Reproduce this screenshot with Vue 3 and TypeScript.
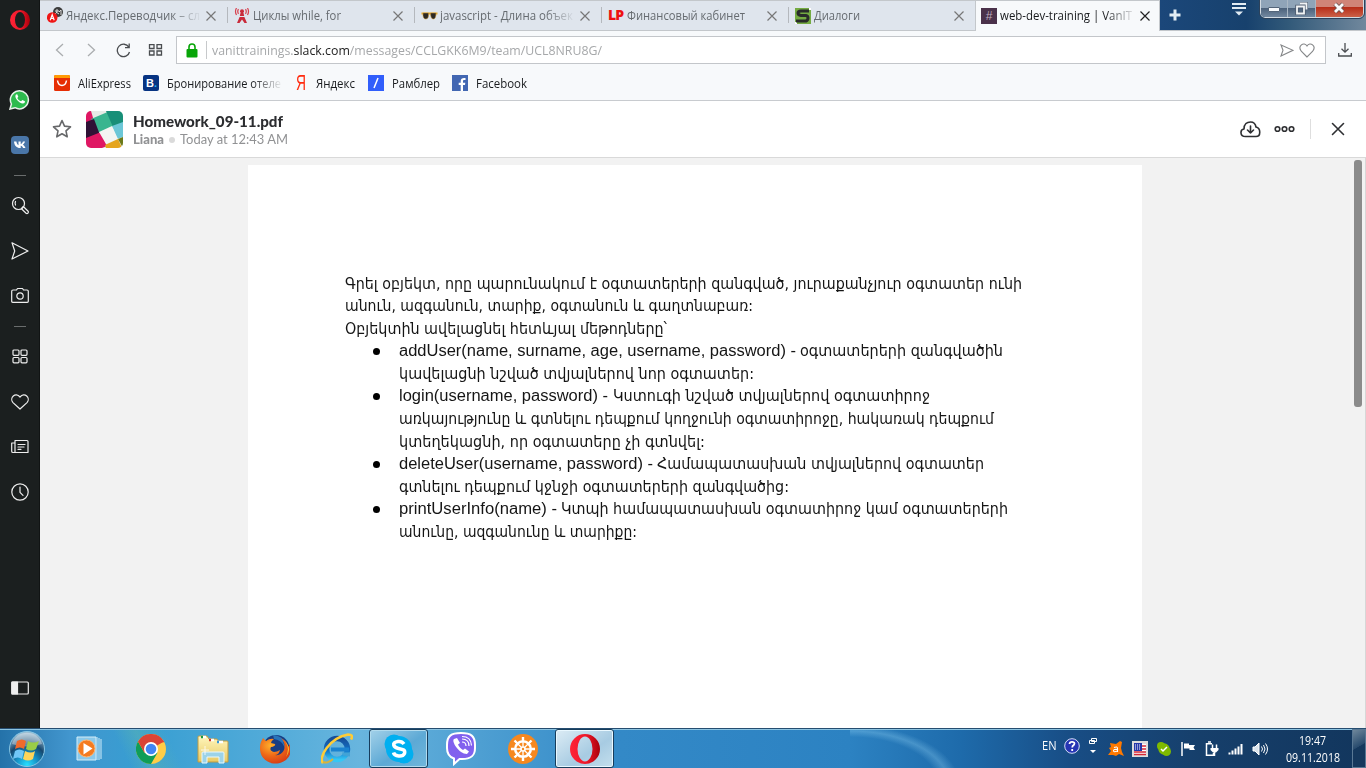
<script setup lang="ts">
import type { Directive } from 'vue'

interface Tab { icon: string; title: string; width: number; active?: boolean; fade?: boolean }
interface Run { text: string; width: number; latin?: boolean; gap?: number }
interface Line { runs: Run[]; item?: boolean; bullet?: boolean }

/* Condenses or stretches a single-line label to a given width in pixels. */
const vFit: Directive<HTMLElement, number> = {
  mounted(el, binding) {
    const natural = el.getBoundingClientRect().width
    if (!natural) return
    el.style.transform = `scaleX(${binding.value / natural})`
    el.style.marginRight = `${binding.value - natural}px`
  },
}

const tabs: Tab[] = [
  { icon: 'translate', title: 'Яндекс.Переводчик – сл', width: 134, fade: true },
  { icon: 'tower', title: 'Циклы while, for', width: 88 },
  { icon: 'glasses', title: 'javascript - Длина объек', width: 133, fade: true },
  { icon: 'lp', title: 'Финансовый кабинет', width: 118 },
  { icon: 's', title: 'Диалоги', width: 46 },
  { icon: 'hash', title: 'web-dev-training | VanIT', width: 132, fade: true, active: true },
]

const lines: Line[] = [
  { runs: [{ text: 'Գրել օբյեկտ, որը պարունակում է օգտատերերի զանգված, յուրաքանչյուր օգտատեր ունի', width: 677 }] },
  { runs: [{ text: 'անուն, ազգանուն, տարիք, օգտանուն և գաղտնաբառ:', width: 408 }] },
  { runs: [{ text: 'Օբյեկտին ավելացնել հետևյալ մեթոդները՝', width: 322 }] },
  { item: true, bullet: true, runs: [{ text: 'addUser(name, surname, age, username, password) -', width: 397, latin: true }, { text: 'օգտատերերի զանգվածին', width: 203, gap: 4 }] },
  { item: true, runs: [{ text: 'կավելացնի նշված տվյալներով նոր օգտատեր:', width: 355 }] },
  { item: true, bullet: true, runs: [{ text: 'login(username, password) -', width: 209, latin: true }, { text: 'Կստուգի նշված տվյալներով օգտատիրոջ', width: 317, gap: 5 }] },
  { item: true, runs: [{ text: 'առկայությունը և գտնելու դեպքում կողջունի օգտատիրոջը, հակառակ դեպքում', width: 595 }] },
  { item: true, runs: [{ text: 'կտեղեկացնի, որ օգտատերը չի գտնվել:', width: 306 }] },
  { item: true, bullet: true, runs: [{ text: 'deleteUser(username, password) -', width: 254, latin: true }, { text: 'Համապատասխան տվյալներով օգտատեր', width: 327, gap: 4 }] },
  { item: true, runs: [{ text: 'գտնելու դեպքում կջնջի օգտատերերի զանգվածից:', width: 390 }] },
  { item: true, bullet: true, runs: [{ text: 'printUserInfo(name) -', width: 158, latin: true }, { text: 'Կտպի համապատասխան օգտատիրոջ կամ օգտատերերի', width: 447, gap: 4 }] },
  { item: true, runs: [{ text: 'անունը, ազգանունը և տարիքը:', width: 238 }] },
]
</script>

<template>
  <div class="screen">
    <svg class="defs" width="0" height="0">
      <defs>
        <linearGradient id="red" x1="0" x2="1"><stop offset="0" stop-color="#ff2437" /><stop offset=".55" stop-color="#ed1729" /><stop offset="1" stop-color="#a9000b" /></linearGradient>
        <linearGradient id="folder" x1="0" y1="0" x2="0" y2="1"><stop offset="0" stop-color="#fff6bd" /><stop offset="1" stop-color="#e9ca62" /></linearGradient>
        <radialGradient id="orb" cx=".5" cy=".95" r=".9"><stop offset="0" stop-color="#25dfff" /><stop offset=".35" stop-color="#168fc4" /><stop offset=".65" stop-color="#16476e" /><stop offset="1" stop-color="#9bbbd0" /></radialGradient>
        <radialGradient id="fox" cx=".35" cy=".3" r=".8"><stop offset="0" stop-color="#ffb12c" /><stop offset=".5" stop-color="#ee6817" /><stop offset="1" stop-color="#d13516" /></radialGradient>
        <linearGradient id="ie" x1="0" y1="0" x2="0" y2="1"><stop offset="0" stop-color="#174f9a" /><stop offset=".55" stop-color="#116fc4" /><stop offset="1" stop-color="#35c7f5" /></linearGradient>
      </defs>
    </svg>
    <div class="browser">
      <nav class="side">
        <div class="slot top"><svg width="20" height="20" viewBox="0 0 30 30"><path fill="url(#red)" fill-rule="evenodd" d="M15 0a15 15 0 1 0 0 30a15 15 0 1 0 0-30zM15 3a7.500 12 0 1 1 0 24a7.500 12 0 1 1 0-24z" /></svg></div>
        <div class="slot"><svg width="21" height="21" viewBox="0 0 21 21"><path d="M1 20l1.400-5A9 9 0 1 1 6 18.700z" fill="#2dbb4e" stroke="#e8f2ea" stroke-width="1.500" /><path d="M7 5.500c-3 3 5 11 8.500 8.500l.5-1.800-2.600-1.300-1.300 1.400C10 11.500 9 10.300 8.300 8.900l1-1.200L8.200 5.300z" fill="#fff" /></svg></div>
        <div class="slot"><svg width="18" height="18" viewBox="0 0 18 18"><rect width="18" height="18" rx="4" fill="#4a76a8" /><path d="M3 5.500h2.400c.3 2 1.200 3.400 2.100 3.800V5.500h2.200v2.600c1-.2 1.800-1.400 2.200-2.600H14c-.3 1.300-1.200 2.500-2.100 3.200 1 .6 2 1.700 2.600 3.300h-2.400c-.4-1.100-1.200-1.900-2.400-2.200V12h-.5C5.600 12 3.300 9.800 3 5.500z" fill="#fff" /></svg></div>
        <i class="dash"></i>
        <div class="slot"><svg class="line" width="20" height="20"><circle cx="8.500" cy="7.500" r="6" /><path d="M5.500 9a4 4 0 0 1 0-3.500M12 12l1.300-1.500 4.800 4.700c1 1.300-.7 3-2 2L11.700 13" /></svg></div>
        <div class="slot"><svg class="line" width="20" height="20"><path d="M2 1.800L18 10 2 18l2.700-8z" /></svg></div>
        <div class="slot"><svg class="line" width="20" height="20"><path d="M3 4h3.500L7.500 2.500h5l1 1.500H17q1.300 0 1.300 1.300v10q0 1-1 1H2.700q-1 0-1-1v-10Q1.700 4 3 4z" /><circle cx="10" cy="10" r="3.200" /></svg></div>
        <i class="dash"></i>
        <div class="slot"><svg class="line" width="18" height="18"><rect x="2" y="2" width="6" height="5.300" rx="1" /><rect x="10" y="2" width="6" height="5.300" rx="1" /><rect x="2" y="9.500" width="6" height="5.300" rx="1" /><rect x="10" y="9.500" width="6" height="5.300" rx="1" /></svg></div>
        <div class="slot"><svg class="line" width="20" height="20"><path d="M10 17L3 10.600C-1 6 5.500-.5 10 5c4.500-5.500 11 1 7 5.600z" /></svg></div>
        <div class="slot"><svg class="line" width="20" height="18"><path d="M5 2.500h12q1 0 1 1v11H3q-1.300 0-1.300-1.300V5H5zM5 5v9M8 6.500h7M8 9h6M8 11.300h3" /></svg></div>
        <div class="slot"><svg class="line" width="20" height="20"><circle cx="10" cy="10" r="8.200" /><path d="M10 5v5.300l3 3" /></svg></div>
        <div class="slot last"><svg class="line" width="20" height="16"><rect x="1.800" y="2" width="16.500" height="12" rx="1" /><path d="M2 2h5.500v12H2z" fill="#eee" /></svg></div>
      </nav>

      <main>
        <header class="tabs">
          <div v-for="t in tabs" :key="t.title" class="tab" :class="{ active: t.active }">
            <span class="fav">
              <svg v-if="t.icon === 'translate'" width="17" height="17"><circle cx="11" cy="5" r="5" fill="#3c3c3c" /><path d="M8 4h4M10 2v2q0 2-2 3M12 5l2-2v5M9 5l3 2" stroke="#ddd" fill="none" /><circle cx="5.200" cy="10.500" r="5.300" fill="#ef1515" /><path d="M3.200 13.200l2-5.400 2 5.400M3.900 11.500h2.600" stroke="#fff" fill="none" stroke-width="1.200" /></svg>
              <svg v-else-if="t.icon === 'tower'" width="16" height="16"><path d="M6.500 5h3l.7 3H5.800zM5.600 9h4.800l2.600 6h-2.500L8 11.500 5.500 15H3z" fill="#c92a3a" /><g fill="none" stroke="#d8404e" stroke-width="1.200"><path d="M4.500 1.200q-1.500 2.300 0 4.600M11.500 1.200q1.500 2.300 0 4.600M2.500 0Q.5 3.500 2.500 7M13.500 0q2 3.500 0 7" /></g><circle cx="8" cy="3.300" r="2" fill="#c92a3a" /></svg>
              <svg v-else-if="t.icon === 'glasses'" width="17" height="16"><path d="M.5 5.500h16" stroke="#e2a92e" stroke-width="2" /><path d="M2 5h5.500q.5 6-2.700 6T2 5zM9.500 5H15q0 6-2.700 6T9.500 5z" fill="#2c2925" stroke="#cc9630" stroke-width=".5" /></svg>
              <b v-else-if="t.icon === 'lp'" class="lp">LP</b>
              <svg v-else-if="t.icon === 's'" width="16" height="16"><rect width="16" height="16" fill="#74ab42" /><path d="M15 0v2M0 15h2" stroke="#fff" stroke-width="2" /><path d="M14 3H6Q3 3 3 5t3 2.500h5q2 .3 2 2.500T11 13H1" fill="none" stroke="#292c2a" stroke-width="3" /></svg>
              <b v-else class="hash">#</b>
            </span>
            <span class="title" :class="{ fade: t.fade }"><span v-fit="t.width" class="fit">{{ t.title }}</span></span>
            <svg class="x" width="10" height="10"><path d="M.5.500l9 9m0-9l-9 9" /></svg>
          </div>
          <div class="frame">
            <svg class="plus" width="12" height="12"><path d="M6 .5v11M.5 6h11" stroke="#e3edf4" stroke-width="3" /></svg>
            <svg class="tabmenu" width="14" height="14"><path d="M0 1h14M0 5h14" stroke="#e2ecf3" stroke-width="2" /><path d="M3 8.500h8l-4 4z" fill="#e2ecf3" /></svg>
            <div class="winbtns">
              <span><svg width="12" height="12"><rect x=".5" y="5.500" width="11" height="4" rx=".5" fill="#f7fafc" stroke="#53657a" /></svg></span>
              <span><svg width="13" height="13"><path d="M5 1.500h6.500v6M2 4.500h7v7H2z" fill="none" stroke="#4d5b6f" stroke-width="3.500" /><path d="M5 1.500h6.500v6M2 4.500h7v7H2z" fill="none" stroke="#f1f4f6" stroke-width="1.800" /></svg></span>
              <span class="shut"><svg width="14" height="12"><path d="M3 2l8 8m0-8l-8 8" stroke="#6e514f" stroke-width="4.500" /><path d="M3 2l8 8m0-8l-8 8" stroke="#fafafa" stroke-width="2.800" /></svg></span>
            </div>
          </div>
        </header>

        <section class="toolbar">
          <div class="navicons">
            <svg class="pale" width="9" height="14"><path d="M8 1L1.500 7 8 13" /></svg>
            <svg class="pale" width="9" height="14"><path d="M1 1l6.500 6L1 13" /></svg>
            <svg width="15" height="15"><path d="M12.800 4.200A6.200 6.200 0 1 0 13.500 9M13.200.500v4.200H9" /></svg>
            <svg width="15" height="12"><path d="M1.500.5h4.500v4H1.500zM9 .500h4.500v4H9zM1.500 7h4.500v4H1.500zM9 7h4.500v4H9z" /></svg>
          </div>
          <div class="url">
            <svg width="12" height="15"><path d="M3 7V4a3 3 0 0 1 6 0v3" fill="none" stroke="#08a508" stroke-width="1.600" /><rect x=".5" y="6" width="11" height="8.500" rx="1" fill="#08a508" /></svg>
            <i></i>
            <span v-fit="390" class="fit address">vanittrainings.<b>slack.com</b>/messages/CCLGKK6M9/team/UCL8NRU8G/</span>
            <svg class="grey send" width="14" height="13"><path d="M1 1l12 5.300L1 12l2-5.700z" /></svg>
            <svg class="grey" width="16" height="15"><path d="M8 14L2.500 8.500C-2 3 5-2 8 3c3-5 10 0 5.500 5.500z" /></svg>
          </div>
          <svg class="down" width="14" height="14"><path d="M7 0v9M3.500 5.800L7 9.200l3.500-3.400M.7 10v3h12.600v-3" /></svg>
        </section>

        <section class="bookmarks">
          <a class="b1"><svg width="16" height="16"><rect width="16" height="16" rx="1.500" fill="#e62e04" /><path d="M0 3V1.500Q0 0 1.500 0h13Q16 0 16 1.500V3z" fill="#ff9b05" /><path d="M3.500 5.500c1 6.500 8 6.500 9 0" fill="none" stroke="#fff" stroke-width="1.500" /></svg><span v-fit="53" class="fit">AliExpress</span></a>
          <a class="b2"><span class="booking">B<em>.</em></span><span class="clip"><span v-fit="114" class="fit">Бронирование отеле</span></span></a>
          <a class="b3"><span class="ya"><span v-fit="10" class="fit">Я</span></span><span v-fit="39" class="fit">Яндекс</span></a>
          <a class="b4"><svg width="16" height="16"><path fill="#315efb" d="M0 0h16v16H0z" /><path d="M6 13l4-10" stroke="#fff" stroke-width="1.500" /></svg><span v-fit="48" class="fit">Рамблер</span></a>
          <a><svg width="16" height="16"><path fill="#4267b2" d="M0 0h16v16H0z" /><path d="M11 16V10h2l.3-2.300H11V6.200c0-.8.300-1.200 1.300-1.200h1.200V3c-3-.5-4.800.6-4.800 3v1.700h-2V10h2v6z" fill="#fff" /></svg><span v-fit="51" class="fit">Facebook</span></a>
        </section>

        <section class="file">
          <svg class="star" width="20" height="20"><path d="M10 1.500l2.500 5.600 6 .7-4.500 4 1.200 6L10 14.800 4.800 17.800 6 11.800l-4.500-4 6-.7z" /></svg>
          <svg class="avatar" width="37" height="37" viewBox="0 0 37 37"><path fill="#e7ebe6" d="M0 0h37v37H0z" /><path d="M0 0h5l5 17L0 21z" fill="#df1763" /><path d="M5 8L24 0l6 15-18 7z" fill="#39b58f" /><path d="M20 0h17v12l-10 4z" fill="#188f78" /><path d="M0 11l8-3 6 16-14 6z" fill="#301236" /><path d="M0 27l15-6 6 14-5 2H0z" fill="#df1763" /><path d="M26 15l11-4v15l-6 2z" fill="#6cc7d7" /><path d="M13 21l13-6 6 13-12 5z" fill="#f4f5f2" /><path d="M19 34l13-6 4 9H20z" fill="#e5a51e" /><path d="M32 28l5-2v11z" fill="#6c7a19" /></svg>
          <div class="meta"><b><span v-fit="150" class="fit">Homework_09-11.pdf</span></b><div><strong v-fit="31" class="fit">Liana</strong><i></i><span v-fit="108" class="fit">Today at 12:43 AM</span></div></div>
          <svg class="ink cloud" width="21" height="17"><path d="M5.500 15.500C-.5 15.500 0 8.500 4 8c0-5 3-7 6.500-7 3.200 0 5 2 5.500 5 5 1 5 9.500 0 9.500zM10.500 5v7M7.500 9l3 3 3-3" /></svg>
          <svg class="ink more" width="21" height="8"><circle cx="3.500" cy="4" r="2.300" /><circle cx="10.500" cy="4" r="2.300" /><circle cx="17.500" cy="4" r="2.300" /></svg>
          <i class="rule"></i>
          <svg class="ink" width="14" height="14"><path d="M1.500 1.500l11 11m0-11l-11 11" /></svg>
        </section>

        <section class="viewer">
          <article class="page">
            <p v-for="(l, i) in lines" :key="i" :class="{ item: l.item }">
              <span v-if="l.item" class="mark"><i v-if="l.bullet"></i></span>
              <span v-for="(r, j) in l.runs" :key="j" class="run" :class="{ latin: r.latin, spaced: r.gap === 4, wide: r.gap === 5 }"><span v-fit="r.width" class="fit">{{ r.text }}</span></span>
            </p>
          </article>
          <div class="thumb"></div>
        </section>
      </main>
    </div>

    <footer class="taskbar">
      <div class="start"><svg width="38" height="38" viewBox="0 0 38 38"><circle cx="19" cy="19" r="17.500" fill="url(#orb)" stroke="#86c6e4" /><path d="M4 14C8-1 30-1 34 14q-15 5-30 0z" fill="#fff" opacity=".35" /><path d="M9 11q5-3 9 0l-2 8q-4-3-9 0z" fill="#f06a2b" /><path d="M20 11q5 3 11 0l-3 8q-5 3-10 0z" fill="#9acc47" /><path d="M7 21q4-3 9 0l-2 8q-4-3-9 0z" fill="#71c7f7" /><path d="M17 21q6 3 10 0l-2 8q-5 3-10 0z" fill="#ffd55a" /></svg></div>
      <div class="app"><svg width="30" height="30"><path d="M3 3h19v23H3z" fill="#8ac9eb" stroke="#d4edf8" /><path d="M23 3v23M25 4v22M27 5v20" stroke="#b8e0f3" stroke-width="1.200" /><circle cx="12.500" cy="14.500" r="8.500" fill="#f47b20" stroke="#ffb875" /><path d="M9.500 9l9 5.500-9 6z" fill="#fff" /></svg></div>
      <div class="app"><svg width="30" height="30" viewBox="0 0 30 30"><circle cx="15" cy="15" r="15" fill="#ffcd46" /><path d="M15 15L2 7.500A15 15 0 0 1 28 7.500z" fill="#db4437" /><path d="M2 7.500A15 15 0 0 0 15 30l6.500-11.200L8.500 18.700z" fill="#0f9d58" /><path d="M2 7.500l6.500 11.300L15 8.200h13.400l-.6-1z" fill="#db4437" /><circle cx="15" cy="15" r="7" fill="#fff" /><circle cx="15" cy="15" r="5.300" fill="#4285f4" /></svg></div>
      <div class="app"><svg width="34" height="30"><path d="M2 28V3q0-1 1-1h8l2 3h8l1 2h9q1 0 1 1v20z" fill="url(#folder)" stroke="#bf9b43" /><path d="M5 3h5M13 6h5M21 8h6" stroke="#fff" stroke-width="2.500" /><path d="M5 3h2" stroke="#189b43" stroke-width="2.500" /><path d="M13 6h2" stroke="#d43b24" stroke-width="2.500" /><path d="M21 8h2" stroke="#3a98d6" stroke-width="2.500" /><path d="M6 29V19q0-1 1-1h20q1 0 1 1v10h-5v-6H11v6z" fill="#9cd3e8" stroke="#e6f8ff" /><path d="M9 12v9M5 16h8" stroke="#fff" opacity=".8" /></svg></div>
      <div class="app"><svg width="30" height="30"><circle cx="16" cy="14.500" r="13.500" fill="#173d83" /><path d="M13 1q9 0 14 10-2-2-4-3 2 3 2 6-3-8-11-9z" fill="#2874ba" /><path d="M1 8L3 4l3 3q4-3 8-2-3 2-3 4l4 1q1 2-4 3-2 4 3 5 3 0 6-2-1 5-5 5 6 1 9-5 2-7-3-12 6 3 7 9l2-3q3 10-4 16C15 34-1 28 0 13q0-3 1-5z" fill="url(#fox)" /><path d="M23 5q8 8 3 18 7-9-3-18z" fill="#ffd52f" /></svg></div>
      <div class="app"><svg width="32" height="32"><circle cx="16" cy="16" r="10.500" fill="none" stroke="url(#ie)" stroke-width="5.500" /><path d="M10 16.500h18" stroke="#1b83d0" stroke-width="4" /><path d="M21 19.500h8v4l-7-1z" fill="#42a3d6" /><path d="M2 30C-3 25 8 5 27 1.500q6 0 3 5" fill="none" stroke="#ffcc36" stroke-width="2.500" /><path d="M2 29q4 2 10-3" stroke="#d9b33a" fill="none" stroke-width="2" /></svg></div>
      <div class="app open"><svg width="30" height="30"><circle cx="10" cy="10" r="9.500" fill="#00aff0" /><circle cx="20" cy="20" r="9.500" fill="#00aff0" /><circle cx="15" cy="15" r="13" fill="#00aff0" /><path d="M20 10q-2-3-6-2.500c-7 1-4.500 6 .5 7s7 1.500 6 5c-2 4-10 3-11-1" fill="none" stroke="#fff" stroke-width="3.500" /></svg></div>
      <div class="app"><svg width="32" height="34"><path d="M16 1C6 1 2 4 2 13v3c0 6 2 9 7 10.500V32l5.500-5H17c9 0 13-3 13-11v-3C30 4 26 1 16 1z" fill="#8161ee" stroke="#fff" stroke-width="2" /><path d="M9 7c-3 2 5 15 13 15l2-2.500-4-3-2 1.500c-2-1-4-3-5-5.500l2-1.500-3-5z" fill="#fff" /><path d="M17 7q7 0 7 7M17 10q4 0 4 4M17 4.500q9 0 9.500 9" fill="none" stroke="#fff" stroke-width="1.200" /></svg></div>
      <div class="app"><svg width="30" height="30"><circle cx="15" cy="15" r="15" fill="#f6881f" /><g fill="none" stroke="#fff"><circle cx="15" cy="15" r="7.800" stroke-width="2.600" /><path d="M15 4v22M4 15h22M7.200 7.200l15.600 15.600M22.800 7.200L7.200 22.800" stroke-width="1.300" /><path d="M15 3v3M15 24v3M3 15h3M24 15h3M6.500 6.500l2 2M21.500 21.500l2 2M23.500 6.500l-2 2M8.500 21.500l-2 2" stroke-width="2.400" /></g><circle cx="15" cy="15" r="2.800" fill="#fff" /><circle cx="15" cy="15" r="1.200" fill="#f6881f" /></svg></div>
      <div class="app open bright"><svg width="30" height="30"><path fill="url(#red)" fill-rule="evenodd" d="M15 0a15 15 0 1 0 0 30a15 15 0 1 0 0-30zM15 2.500a7.500 12.500 0 1 1 0 25a7.500 12.500 0 1 1 0-25z" /></svg></div>

      <div class="tray">
        <span v-fit="14.500" class="fit lang">EN</span>
        <div class="t1"><svg width="16" height="16"><circle cx="8" cy="8" r="7.300" fill="#2635b4" stroke="#d6def7" /><path d="M5.500 6q.2-2.300 2.700-2.200 3.300.5 1.800 3Q8.200 8 8.200 9.500M8.200 11v2" fill="none" stroke="#fff" stroke-width="1.800" /></svg></div>
        <div class="t2"><svg width="10" height="18"><path d="M3.500 2.500h5v3h-5zM1.500 4.500h5v3h-5z" fill="#174675" stroke="#fff" /><path d="M2 14h6l-3 3z" fill="#fff" /></svg></div>
        <div class="t3"><svg width="16" height="16"><path d="M2 2l6 1 4-3 2 1-1 6 1 4 2 4-5-2-3 2-3-1-5 0 3-4-2-3 2-1z" fill="#ff7900" /><path d="M6 6.500q3.500-1.500 3.500 1V11m0-2.500Q5.500 8 5.500 9.800T9.500 10" fill="none" stroke="#fff" stroke-width="1.100" /></svg></div>
        <div class="t4"><svg width="16" height="16"><path d="M0 0h16v16H0z" fill="#ddd" /><path d="M2 3h12v11H2z" fill="#fff" /><path d="M2 5h12M2 8h12M2 11h12M2 13.500h12" stroke="#d52735" stroke-width="1.300" /><path d="M2 2h8v8H2z" fill="#2638ac" /><path d="M3 4h6M3 6h6M3 8h6" stroke="#fff" stroke-dasharray="1 1" /></svg></div>
        <div class="t5"><svg width="16" height="16"><circle cx="5" cy="5" r="4" fill="#7fba00" /><circle cx="10.500" cy="10.500" r="4.500" fill="#7fba00" /><circle cx="8" cy="8" r="5.700" fill="#7fba00" /><path d="M5 8l2 2 4-4" fill="none" stroke="#fff" stroke-width="1.500" /></svg></div>
        <div class="t6"><svg width="16" height="16"><path d="M2 1v14" stroke="#fff" stroke-width="1.500" /><path d="M4 2.500h5V4h6l-1.500 2.500L15 9h-5.500V7.500H4z" fill="#fff" /></svg></div>
        <div class="t7"><svg width="16" height="16"><path d="M8 2.700H2.500v11.500H9.500V12M4 1h3" fill="none" stroke="#fff" stroke-width="1.500" /><path d="M6.500 7h8v2l-2.500 2.500H9L6.500 9z" fill="#fff" /><path d="M8.500 3.500V7M12.500 3.500V7M10.500 11v4" stroke="#fff" stroke-width="1.500" /></svg></div>
        <div class="t8"><svg width="16" height="16"><path d="M1.500 11.500v2M4.500 9.500v4M7.500 7.500v6M10.500 5.500v8M13.500 3v10.500" stroke="#fff" stroke-width="2" /></svg></div>
        <div class="t9"><svg width="16" height="16"><path d="M1 6h2l4-4v12l-4-4H1z" fill="#dbe4ec" stroke="#fff" /><path d="M9.500 5.500q2 2.500 0 5M11.500 4q3 4 0 8M13.500 2.500q4 5.500 0 11" fill="none" stroke="#fff" /></svg></div>
        <div class="clock"><span v-fit="27" class="fit">19:47</span><span v-fit="54" class="fit">09.11.2018</span></div>
      </div>
      <div class="peek"></div>
    </footer>
  </div>
</template>

<style>
body { margin: 0; overflow: hidden; }
</style>
<style scoped>
* { box-sizing: border-box; }
svg { display: block; flex: none; }
.screen { width: 1366px; height: 768px; display: flex; flex-direction: column; overflow: hidden; font-family: "Open Sans", "Noto Sans", sans-serif; font-size: 12px; background: #fff; }
.defs { position: absolute; }
.fit { display: inline-block; white-space: nowrap; transform-origin: 0 50%; flex: none; }
.browser { height: 728px; display: flex; }
.side { width: 40px; flex: none; background: #1b1f1f; display: flex; flex-direction: column; border-right: 1px solid #111414; }
.slot { height: 45px; display: flex; align-items: center; justify-content: center; flex: none; }
.slot.top { height: 40px; margin-bottom: 37px; }
.slot.last { margin: auto 0 18px; }
.dash { height: 16px; display: flex; align-items: center; justify-content: center; flex: none; }
.dash::before { content: ""; width: 12px; height: 1px; background: #6a6d6d; }
.line { fill: none; stroke: #eee; stroke-width: 1.200; stroke-linejoin: round; stroke-linecap: round; }
main { flex: 1; min-width: 0; display: flex; flex-direction: column; }

.tabs { height: 31px; display: flex; border-top: 1px solid #c3c7cb; flex: none; }
.tab { width: 187px; flex: none; background: #dfe5ed; border-bottom: 1px solid #c3c7cb; display: flex; align-items: center; padding: 0 11px 0 7px; color: #666b70; position: relative; }
.tab:not(:first-child)::before { content: ""; position: absolute; left: 0; top: 6px; width: 1px; height: 16px; background: #b4b8bd; }
.tab.active { width: 185px; background: #f7f9fb; border: solid #c3c7cb; border-width: 0 1px 0 1px; color: #17191c; padding: 0 9px 1px 5px; }
.tab.active::before { display: none; }
.tab.active .x { stroke: #222; }
.fav { width: 19px; display: flex; flex: none; }
.title { flex: 1; min-width: 0; overflow: hidden; }
.fade { -webkit-mask-image: linear-gradient(90deg, #000 105px, transparent 136px); mask-image: linear-gradient(90deg, #000 105px, transparent 136px); }
.x { fill: none; stroke: #777; stroke-width: 1.200; }
.lp { color: #ee1111; font: 900 14px/14px "Open Sans", sans-serif; letter-spacing: -1px; margin-top: -2px; }
.hash { width: 16px; height: 16px; background: #4a314a; color: #bca9bd; font: 12px/16px "Liberation Sans", sans-serif; text-align: center; }
.frame { flex: 1; display: flex; align-items: flex-start; margin-top: -1px; background: linear-gradient(90deg, #1b477a 0, #17416d 42%, #315979 62%, #71889d 100%); border-bottom: 1px solid #c3c7cb; }
.plus { margin: 9px 0 0 9px; }
.tabmenu { margin: 3px 0 0 51px; }
.winbtns { margin: 0 2px 0 auto; width: 104px; height: 18px; display: flex; border: 1px solid #d2dbe2; border-top: 0; border-radius: 0 0 5px 5px; overflow: hidden; outline: 1px solid #2c425b; }
.winbtns span { width: 28px; display: flex; justify-content: center; align-items: center; background: linear-gradient(#8fa4b8 0 45%, #4a6079 46%, #7288a0); border-right: 1px solid #a9b7c4; padding-bottom: 1px; }
.winbtns .shut { width: 48px; border: 0; background: linear-gradient(#d08477 0 42%, #b72e19 44%, #cb6148); }

.toolbar { height: 37px; background: #f7f9fb; display: flex; align-items: center; padding-top: 1px; flex: none; }
.toolbar > svg, .navicons svg { fill: none; stroke: #4a4d50; stroke-width: 1.300; }
.navicons { width: 136px; display: flex; align-items: center; padding-left: 15px; flex: none; }
.navicons svg.pale { stroke: #aaadaf; }
.navicons svg:nth-child(2) { margin-left: 23px; }
.navicons svg:nth-child(3) { margin-left: 20px; }
.navicons svg:nth-child(4) { margin-left: 17px; }
.url { width: 1150px; height: 28px; border: 1px solid #c3c6ca; background: #fff; display: flex; align-items: center; padding: 0 10px 0 9px; }
.url i { width: 1px; height: 18px; background: #c7c9cb; margin: 0 5px 0 8px; }
.address { color: #a6a8aa; font-size: 12.500px; }
.address b { color: #222; font-weight: 400; }
.grey { fill: none; stroke: #858789; stroke-width: 1.100; }
.send { margin: 0 5px 0 auto; }
.down { margin-left: 12px; }

.bookmarks { height: 33px; background: #f7f9fb; border-bottom: 1px solid #c8cbcf; display: flex; align-items: center; padding: 0 0 2px 14px; color: #191b1e; flex: none; }
.bookmarks a { display: flex; align-items: center; gap: 8px; flex: none; }
.b1 { width: 89px; }
.b2 { width: 152px; }
.b3 { width: 73px; }
.b4 { width: 84px; }
.booking { width: 16px; height: 16px; border-radius: 2px; background: #073482; color: #fff; font: 700 11px/16px "Liberation Sans", sans-serif; padding-left: 3px; flex: none; }
.booking em { color: #22b1ef; font-style: normal; }
.clip { width: 114px; -webkit-mask-image: linear-gradient(90deg, #000 85px, transparent 116px); mask-image: linear-gradient(90deg, #000 85px, transparent 116px); }
.ya { width: 13px; padding-left: 1px; color: #ff2c10; font: 22px/20px "Liberation Sans", sans-serif; }

.file { height: 57px; background: #fff; border-bottom: 1px solid #d9d9d9; display: flex; align-items: center; padding: 0 21px 0 12px; font-family: Lato, sans-serif; flex: none; }
.star { fill: none; stroke: #67686a; stroke-width: 1.600; stroke-linejoin: round; }
.avatar { margin-left: 14px; border-radius: 5px; }
.meta { margin-left: 10px; height: 36px; color: #2c2d30; }
.meta > b { display: block; font-size: 15.500px; line-height: 20px; font-weight: 900; }
.meta > div { display: flex; align-items: center; height: 17px; color: #919294; font-size: 13.500px; line-height: 17px; }
.meta strong { font-weight: 900; }
.meta i { width: 6px; height: 6px; border-radius: 50%; background: #dadada; margin: 0 5px 0 5px; }
.ink { fill: none; stroke: #2e2f32; stroke-width: 1.600; stroke-linecap: round; stroke-linejoin: round; }
.cloud { margin-left: auto; }
.more { margin-left: 13px; }
.rule { width: 1px; height: 20px; background: #dedede; margin: 0 20px 0 15px; }

.viewer { flex: 1; background: #f2f2f2; display: flex; padding: 7px 3px 0 208px; border-right: 1px solid #d7d7d7; overflow: hidden; }
.page { width: 894px; height: 563px; background: #fff; padding: 107.500px 0 0 97px; color: #151515; flex: none; }
.page p { margin: 0; height: 22.600px; display: flex; align-items: baseline; line-height: 22px; }
.mark { width: 54px; display: flex; align-self: center; padding-left: 28px; }
.mark i { width: 7px; height: 7px; border-radius: 50%; background: #000; }
.run { font: 16px/22px "DejaVu Sans Condensed", "DejaVu Sans", sans-serif; white-space: nowrap; }
.run.latin { font: 16px/22px "Liberation Sans", sans-serif; }
.spaced { margin-left: 4px; }
.wide { margin-left: 5px; }
.thumb { width: 8px; height: 247px; margin: -5px 0 0 auto; border-radius: 3px; background: #8b8b8b; }

.taskbar { height: 40px; display: flex; border-top: 1px solid #264d70; box-shadow: inset 0 1px #8cc4e2; background: radial-gradient(ellipse 110px 60px at 0 56px, transparent 80%, #8fd0f255 90%, transparent 100%) 850px 0 / 120px 40px no-repeat, linear-gradient(64deg, transparent 0 118px, #66b9a866 138px, transparent 165px), linear-gradient(90deg, #2472a9 0, #4296ce 70px, #379ed2 140px, #52abd9 270px, #68b5de 360px, #4e9fd2 480px, #3389c7 620px, #2c82c2 850px, #1e6bab 960px, #184d85 1070px, #163f6b 1200px, #12365d 100%); color: #fff; }
.start { width: 59px; display: flex; justify-content: center; align-items: center; padding-right: 5px; }
.app { width: 59px; margin-right: 3px; height: 39px; display: flex; align-items: center; justify-content: center; flex: none; }
.open { border: 1px solid #173d5c; border-radius: 3px; box-shadow: inset 0 0 0 1px #b2dbee; background: linear-gradient(145deg, #a3d1e9, #5da9d5 55%, #70b6db); }
.bright { background: linear-gradient(145deg, #dcecf5, #a7cbe2 60%, #c4dfed); box-shadow: inset 0 0 0 1px #e9f8ff; }
.tray { margin-left: auto; width: 310px; display: flex; align-items: center; }
.lang { line-height: 18px; margin-top: -6px; }
.tray > div:not(.clock) { display: flex; justify-content: center; width: 24px; flex: none; }
.tray > .t1 { margin-left: 3px; margin-top: -5px; }
.tray > .t2 { margin-left: -3px; margin-top: -7px; }
.tray > .t3 { margin-left: -1px; }
.clock { width: 70px; margin-left: 6px; display: flex; flex-direction: column; align-items: center; line-height: 17px; flex: none; }
.peek { width: 14px; flex: none; border: 1px solid #597894; background: linear-gradient(150deg, #6f879b, #284b6e 45%, #15385d 46%); }
</style>
